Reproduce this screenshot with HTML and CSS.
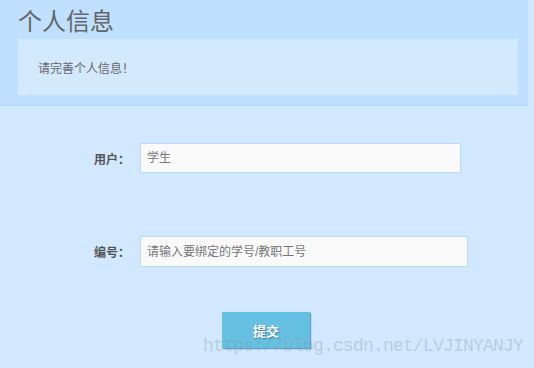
FILE: index.html
```html
<!DOCTYPE html>
<html lang="zh">
<head>
<meta charset="utf-8">
<link rel="stylesheet" href="styles.css">
</head>
<body>
<div class="page">
  <div class="header">
    <h1 class="title">个人信息</h1>
    <div class="notice">请完善个人信息！</div>
  </div>
  <form class="form">
    <div class="row">
      <label class="label">用户：</label>
      <input class="input input-a" type="text" placeholder="学生">
    </div>
    <div class="row row-2">
      <label class="label">编号：</label>
      <input class="input input-b" type="text" placeholder="请输入要绑定的学号/教职工号">
    </div>
    <div class="actions">
      <button class="btn" type="button">提交</button>
    </div>
  </form>
  <div class="watermark">https://blog.csdn.net/LVJINYANJY</div>
</div>
</body>
</html>
```
FILE: styles.css
```css
* { box-sizing: border-box; }
html, body {
  margin: 0;
  padding: 0;
  background: #d2e8fe;
  font-family: "Liberation Sans", "Noto Sans CJK SC", sans-serif;
}
.page {
  position: relative;
  width: 534px;
  height: 368px;
  overflow: hidden;
}
.header {
  width: 528px;
  height: 106px;
  background: #bfe0fe;
  border-bottom: 1px solid #b2d7f7;
  padding-top: 8px;
}
.title {
  margin: 0;
  padding-left: 18px;
  font-size: 24px;
  line-height: 28px;
  font-weight: normal;
  color: #666;
}
.notice {
  margin: 3px 10px 0 18px;
  height: 56px;
  background: #d3e9fe;
  display: flex;
  align-items: center;
  padding-left: 20px;
  font-size: 12px;
  color: #666;
}
.form {
  padding-top: 37px;
  margin: 0;
}
.row {
  display: flex;
  align-items: center;
  padding-left: 94px;
}
.row-2 {
  margin-top: 63px;
}
.label {
  width: 46px;
  font-size: 12px;
  font-weight: bold;
  color: #555;
}
.input {
  height: 30px;
  border: 1px solid #b6daf8;
  background: #fafafa;
  padding: 0 6px;
  font-family: "Liberation Sans", "Noto Sans CJK SC", sans-serif;
  font-size: 12px;
  color: #555;
  outline: none;
}
.input::placeholder { color: #777; }
.input-a { width: 321px; }
.input-b { width: 328px; height: 31px; }
.actions {
  padding-left: 222px;
  margin-top: 45px;
}
.btn {
  width: 88px;
  height: 36px;
  border: none;
  background: #65c0e2;
  box-shadow: 1px 1px 1px #5d9fc4;
  color: #fff;
  font-family: "Liberation Sans", "Noto Sans CJK SC", sans-serif;
  font-size: 13px;
  font-weight: bold;
  text-shadow: 1px 1px 1px #4a7d96;
  padding: 0;
}
.watermark {
  position: absolute;
  left: 203px;
  top: 336px;
  font-family: "Liberation Mono", monospace;
  font-size: 18px;
  letter-spacing: -0.8px;
  color: rgba(140, 150, 160, 0.35);
  white-space: nowrap;
  pointer-events: none;
}
```
